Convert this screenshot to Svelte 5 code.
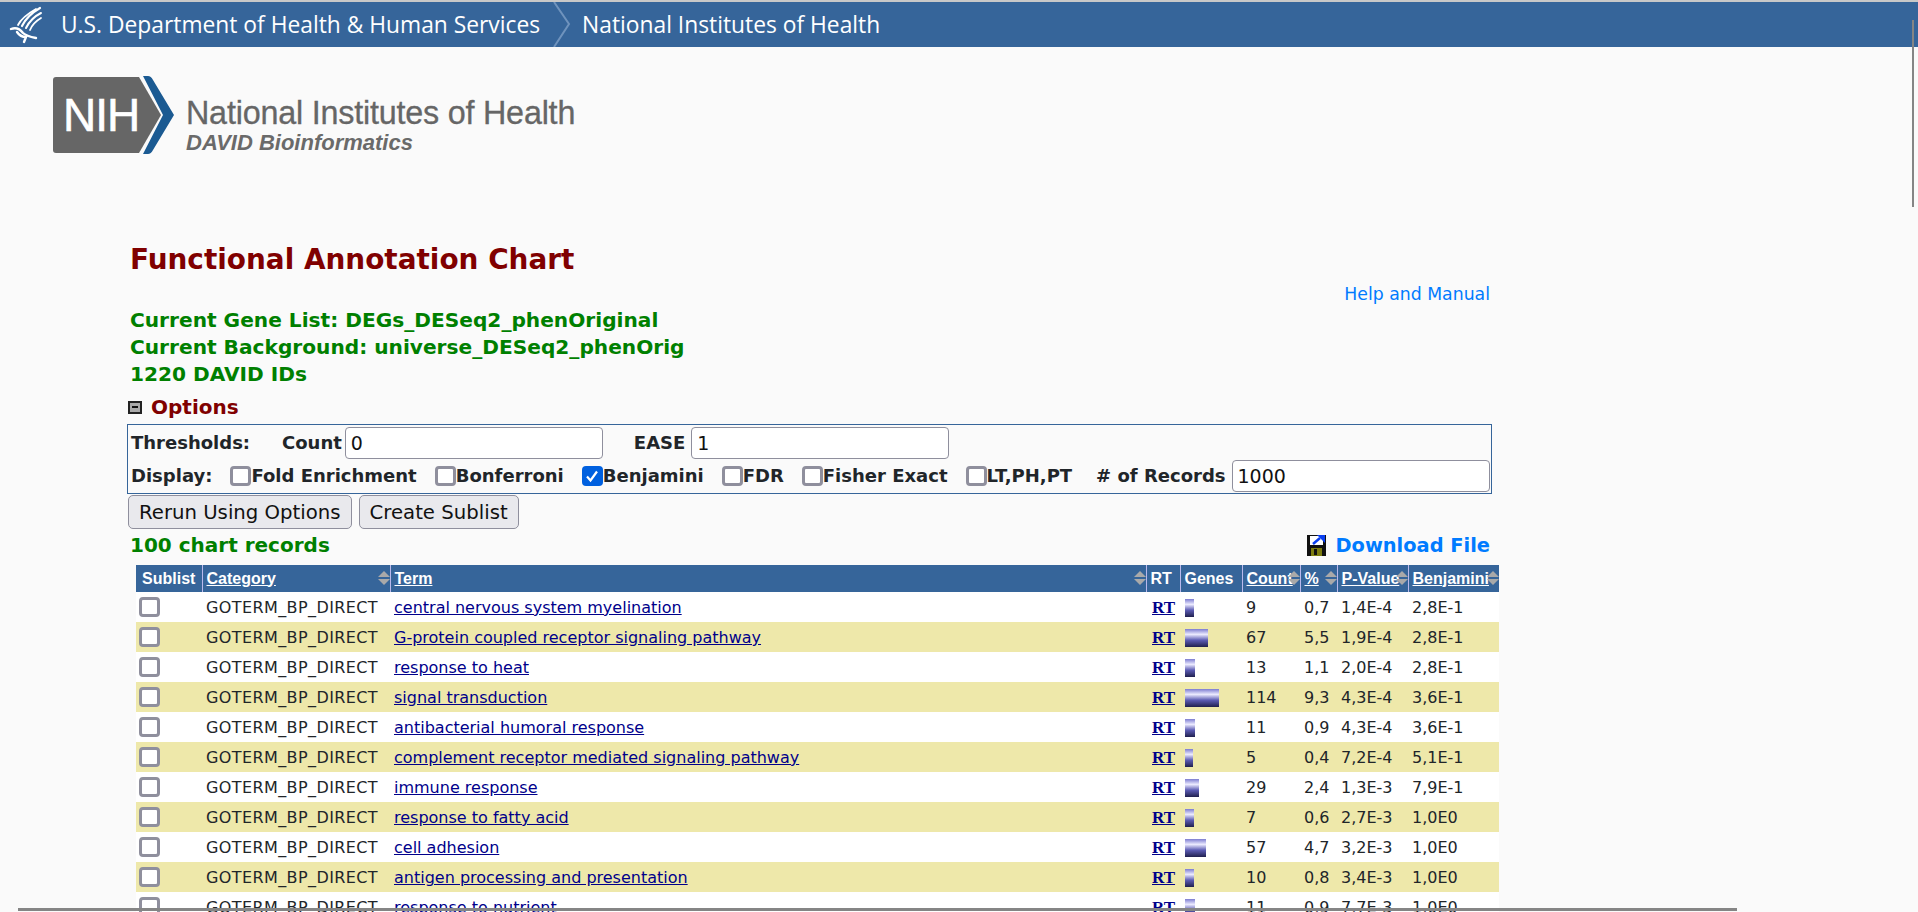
<script>
  const rows = [
    { term: 'central nervous system myelination', count: 9, pct: '0,7', p: '1,4E-4', b: '2,8E-1' },
    { term: 'G-protein coupled receptor signaling pathway', count: 67, pct: '5,5', p: '1,9E-4', b: '2,8E-1' },
    { term: 'response to heat', count: 13, pct: '1,1', p: '2,0E-4', b: '2,8E-1' },
    { term: 'signal transduction', count: 114, pct: '9,3', p: '4,3E-4', b: '3,6E-1' },
    { term: 'antibacterial humoral response', count: 11, pct: '0,9', p: '4,3E-4', b: '3,6E-1' },
    { term: 'complement receptor mediated signaling pathway', count: 5, pct: '0,4', p: '7,2E-4', b: '5,1E-1' },
    { term: 'immune response', count: 29, pct: '2,4', p: '1,3E-3', b: '7,9E-1' },
    { term: 'response to fatty acid', count: 7, pct: '0,6', p: '2,7E-3', b: '1,0E0' },
    { term: 'cell adhesion', count: 57, pct: '4,7', p: '3,2E-3', b: '1,0E0' },
    { term: 'antigen processing and presentation', count: 10, pct: '0,8', p: '3,4E-3', b: '1,0E0' },
    { term: 'response to nutrient', count: 11, pct: '0,9', p: '7,7E-3', b: '1,0E0' }
  ];

  const columns = [
    { name: 'Sublist', width: 66 },
    { name: 'Category', width: 188, link: true, sort: true },
    { name: 'Term', width: 756, link: true, sort: true },
    { name: 'RT', width: 34 },
    { name: 'Genes', width: 62 },
    { name: 'Count', width: 58, link: true, sort: true },
    { name: '%', width: 37, link: true, sort: true },
    { name: 'P-Value', width: 71, link: true, sort: true },
    { name: 'Benjamini', width: 91, link: true, sort: true }
  ];

  const displayOptions = [
    { label: 'Fold Enrichment', checked: false },
    { label: 'Bonferroni', checked: false },
    { label: 'Benjamini', checked: true },
    { label: 'FDR', checked: false },
    { label: 'Fisher Exact', checked: false },
    { label: 'LT,PH,PT', checked: false }
  ];

  // bar grows with the gene count
  function barWidth(count) {
    return Math.round(7 + count * 0.24);
  }
</script>

<div class="page">
  <header class="hhs">
    <svg class="eagle" width="34" height="40" viewBox="0 0 34 40" aria-hidden="true">
      <g fill="none" stroke="#fff" stroke-linecap="round">
        <path d="M31 3 C24 7 17 13 13 21" stroke-width="2.2" />
        <path d="M32 8 C26 11 20 17 17 23" stroke-width="2" />
        <path d="M32 13 C27 16 23 20 21 25" stroke-width="1.8" />
        <path d="M27 4 C20 8 12 14 9 20" stroke-width="1.8" />
        <path d="M2 24 C7 22 11 24 14 28 C17 31 22 32 27 33" stroke-width="2.4" />
        <path d="M8 27 C10 30 14 32 17 32 L15 37" stroke-width="2.4" />
      </g>
    </svg>
    <span class="hhs-name">U.S. Department of Health &amp; Human Services</span>
    <svg class="crumb" width="18" height="45" viewBox="0 0 18 45" aria-hidden="true">
      <path d="M1 0 L16 22 L1 45" fill="none" stroke="#6f93bd" stroke-width="2" />
    </svg>
    <span class="hhs-name">National Institutes of Health</span>
  </header>

  <div class="brand">
    <div class="nih-mark">
      <svg class="mark-bg" width="122" height="78" viewBox="0 0 122 78" aria-hidden="true">
        <path d="M4 1 H87 L109 39 L87 77 H4 Q1 77 1 74 V4 Q1 1 4 1 Z" fill="#666" />
        <path d="M91 0 H96 Q99 0 101 4 L122 39 L101 74 Q99 78 96 78 H91 L111 39 Z" fill="#1b5a92" />
      </svg>
      <span class="mark-text">NIH</span>
    </div>
    <div class="brand-text">
      <div class="brand-name">National Institutes of Health</div>
      <div class="brand-sub">DAVID Bioinformatics</div>
    </div>
  </div>

  <main class="content">
    <h1>Functional Annotation Chart</h1>

    <div class="help-row"><a href="#help">Help and Manual</a></div>

    <div class="list-info">
      <div>Current Gene List: DEGs_DESeq2_phenOriginal</div>
      <div>Current Background: universe_DESeq2_phenOrig</div>
      <div>1220 DAVID IDs</div>
    </div>

    <div class="options-title">
      <span class="collapse"></span>
      <span>Options</span>
    </div>

    <div class="options">
      <div class="opt-row first">
        <span class="opt-label">Thresholds:</span>
        <span class="count-label">Count</span>
        <input class="num" value="0" />
        <span class="ease-label">EASE</span>
        <input class="num" value="1" />
      </div>
      <div class="opt-row">
        <span class="opt-label display-label">Display:</span>
        {#each displayOptions as opt}
          <label class="check"><input type="checkbox" checked={opt.checked} />{opt.label}</label>
        {/each}
        <span class="records-label"># of Records</span>
        <input class="num" value="1000" />
      </div>
    </div>

    <div class="buttons">
      <button>Rerun Using Options</button>
      <button>Create Sublist</button>
    </div>

    <div class="records-row">
      <span class="records">100 chart records</span>
      <a class="download" href="#download">
        <svg width="20" height="22" viewBox="0 0 20 22" aria-hidden="true">
          <rect x="0" y="1" width="19" height="21" fill="#111" />
          <rect x="3" y="2" width="13" height="9" fill="#fff" />
          <path d="M6 10 L13 4" stroke="#0a3ff0" stroke-width="2.5" fill="none" />
          <path d="M10 1 H18 V9 Z" fill="#0a3ff0" />
          <rect x="4" y="14" width="11" height="8" fill="#7d7d10" />
          <rect x="7" y="15" width="3" height="6" fill="#111" />
        </svg>
        <span>Download File</span>
      </a>
    </div>

    <table>
      <colgroup>
        {#each columns as col}
          <col style="width: {col.width}px" />
        {/each}
      </colgroup>
      <thead>
        <tr>
          {#each columns as col}
            <th>
              {#if col.link}<a href="#sort">{col.name}</a>{:else}{col.name}{/if}
              {#if col.sort}
                <span class="sort"><i class="up"></i><i class="down"></i></span>
              {/if}
            </th>
          {/each}
        </tr>
      </thead>
      <tbody>
        {#each rows as row}
          <tr>
            <td class="box"><input type="checkbox" /></td>
            <td class="category">GOTERM_BP_DIRECT</td>
            <td><a class="term" href="#term">{row.term}</a></td>
            <td class="rt-cell"><a class="rt" href="#rt">RT</a></td>
            <td><div class="bar" style="width: {barWidth(row.count)}px"></div></td>
            <td>{row.count}</td>
            <td>{row.pct}</td>
            <td>{row.p}</td>
            <td>{row.b}</td>
          </tr>
        {/each}
      </tbody>
    </table>
  </main>

  <div class="scroll-v"></div>
  <div class="scroll-h"></div>
</div>

<style>
  :global(body) {
    margin: 0;
    background: #fafafa;
  }

  .page {
    position: relative;
    height: 912px;
    overflow: hidden;
    font-family: "DejaVu Sans", Verdana, sans-serif;
    color: #212529;
  }

  .hhs {
    display: flex;
    align-items: center;
    height: 45px;
    border-top: 2px solid #c8c8c8;
    background: #36659a;
    color: #fff;
    font-family: "Open Sans", sans-serif;
    font-size: 22.8px;
  }
  .eagle {
    margin-left: 9px;
    margin-right: 18px;
  }
  .crumb {
    margin-left: 13px;
    margin-right: 11px;
  }

  .brand {
    display: flex;
    align-items: center;
    height: 78px;
    margin: 29px 0 0 52px;
  }
  .nih-mark {
    position: relative;
    width: 122px;
    height: 78px;
  }
  .mark-bg {
    display: block;
  }
  .mark-text {
    position: absolute;
    left: 11px;
    top: 16px;
    font: 46px/46px "Liberation Sans", sans-serif;
    color: #fff;
    letter-spacing: -1px;
    -webkit-text-stroke: 0.6px #fff;
  }
  .brand-text {
    margin: 21px 0 0 12px;
    font-family: "Liberation Sans", sans-serif;
    color: #666;
  }
  .brand-name {
    font-size: 32.3px;
    line-height: 35px;
    letter-spacing: -0.2px;
    -webkit-text-stroke: 0.3px #666;
  }
  .brand-sub {
    font-size: 22px;
    line-height: 24px;
    font-style: italic;
    font-weight: bold;
    color: #6a6a6a;
  }

  .content {
    width: 1360px;
    margin-left: 130px;
  }
  h1 {
    margin: 90px 0 0;
    font-size: 27.9px;
    line-height: 32px;
    font-weight: bold;
    color: #800000;
  }
  .help-row {
    text-align: right;
    font-size: 17.3px;
    line-height: 20px;
    margin-top: 8px;
    padding-bottom: 1px;
  }
  .help-row a {
    color: #007bff;
    text-decoration: none;
  }
  .list-info {
    margin-top: 2px;
    font-size: 20.15px;
    line-height: 27px;
    font-weight: bold;
    color: #008000;
  }
  .options-title {
    display: flex;
    align-items: center;
    gap: 9px;
    margin: 7px 0 0 -2px;
    height: 24px;
    font-size: 20px;
    font-weight: bold;
    color: #800000;
  }
  .collapse {
    position: relative;
    box-sizing: border-box;
    width: 14px;
    height: 13px;
    background: #aaa;
    border: 2px solid #222;
  }
  .collapse::after {
    content: "";
    position: absolute;
    left: 2px;
    right: 2px;
    top: 3px;
    height: 2px;
    background: #111;
  }

  .options {
    box-sizing: border-box;
    width: 1365px;
    height: 70px;
    margin: 5px 0 0 -3px;
    padding: 2px 0 0 3px;
    border: 1px solid #36659a;
    font-size: 18px;
    font-weight: bold;
    line-height: 20px;
  }
  .opt-row {
    display: flex;
    align-items: center;
    height: 33px;
    white-space: nowrap;
  }
  .opt-row.first {
    height: 32px;
  }
  .opt-label {
    margin-right: 16px;
  }
  .display-label {
    margin-right: 18px;
  }
  .count-label {
    margin-left: 16px;
    margin-right: 3px;
  }
  .ease-label {
    margin-left: 31px;
    margin-right: 6px;
  }
  .num {
    flex: none;
    box-sizing: border-box;
    width: 258px;
    height: 32px;
    padding: 0 5px;
    border: 1px solid #8f8f9d;
    border-radius: 4px;
    background: #fff;
    font: 19px "DejaVu Sans", sans-serif;
    color: #111;
  }
  .check {
    display: flex;
    align-items: center;
    margin-right: 18px;
  }
  input[type="checkbox"] {
    appearance: none;
    flex: none;
    box-sizing: border-box;
    width: 21px;
    height: 20px;
    margin: 0;
    border: 3px solid #8f8f9d;
    border-radius: 4px;
    background: #fff;
  }
  input[type="checkbox"]:checked {
    border: none;
    background: #0060df url("data:image/svg+xml,%3Csvg xmlns='http://www.w3.org/2000/svg' viewBox='0 0 20 20'%3E%3Cpath d='M5 10.5 L8.5 14.5 L15 5.5' fill='none' stroke='white' stroke-width='2.2'/%3E%3C/svg%3E");
  }
  .records-label {
    margin-left: 6px;
    margin-right: 6px;
  }

  .buttons {
    display: flex;
    gap: 7px;
    margin: 1px 0 0 -2px;
  }
  button {
    box-sizing: border-box;
    height: 34px;
    padding: 0 10px;
    border: 1px solid #8f8f9d;
    border-radius: 5px;
    background: #e9e9ed;
    font: 19.7px "DejaVu Sans", sans-serif;
    color: #111;
  }

  .records-row {
    display: flex;
    justify-content: space-between;
    align-items: center;
    height: 32px;
  }
  .records {
    font-size: 20px;
    font-weight: bold;
    color: #008000;
  }
  .download {
    display: flex;
    align-items: center;
    gap: 8px;
    font-size: 19.4px;
    font-weight: bold;
    color: #007bff;
    text-decoration: none;
  }

  table {
    table-layout: fixed;
    width: 1363px;
    margin: 4px 0 0 6px;
    border-collapse: collapse;
  }
  th {
    position: relative;
    height: 27px;
    padding: 0 0 0 4px;
    background: #36659a;
    border-left: 1px solid #b9b9ec;
    font: bold 16px/18px "Liberation Sans", sans-serif;
    color: #fff;
    text-align: left;
    white-space: nowrap;
  }
  th:first-child {
    border-left: none;
    text-align: center;
    padding: 0;
  }
  th a {
    color: #fff;
  }
  .sort {
    position: absolute;
    right: 0;
    top: 6px;
    display: flex;
    flex-direction: column;
    gap: 2px;
  }
  .sort i {
    width: 0;
    height: 0;
    border-left: 6px solid transparent;
    border-right: 6px solid transparent;
  }
  .sort .up {
    border-bottom: 6px solid #a9a9a9;
  }
  .sort .down {
    border-top: 6px solid #a9a9a9;
  }
  td {
    height: 30px;
    padding: 1px 0 0 4px;
    box-sizing: border-box;
    font-size: 16px;
    white-space: nowrap;
  }
  td.category {
    letter-spacing: 0.4px;
  }
  tbody tr {
    background: #fff;
  }
  tbody tr:nth-child(even) {
    background: #eee8aa;
  }
  td.box {
    padding: 0 0 0 3px;
  }
  td.box input {
    display: block;
  }
  td.rt-cell {
    padding-left: 6px;
  }
  .term {
    color: #00008b;
  }
  .rt {
    font: bold 17px "Liberation Serif", serif;
    color: #00008b;
  }
  .bar {
    height: 18px;
    margin-left: 1px;
    background: linear-gradient(#7c7cd0, #ecebff 30%, #5c5cb4 62%, #20204e);
  }

  .scroll-v {
    position: absolute;
    left: 1912px;
    top: 20px;
    width: 2px;
    height: 187px;
    background: #858585;
  }
  .scroll-h {
    position: absolute;
    left: 18px;
    top: 908px;
    width: 1719px;
    height: 3px;
    background: #858585;
  }
</style>
